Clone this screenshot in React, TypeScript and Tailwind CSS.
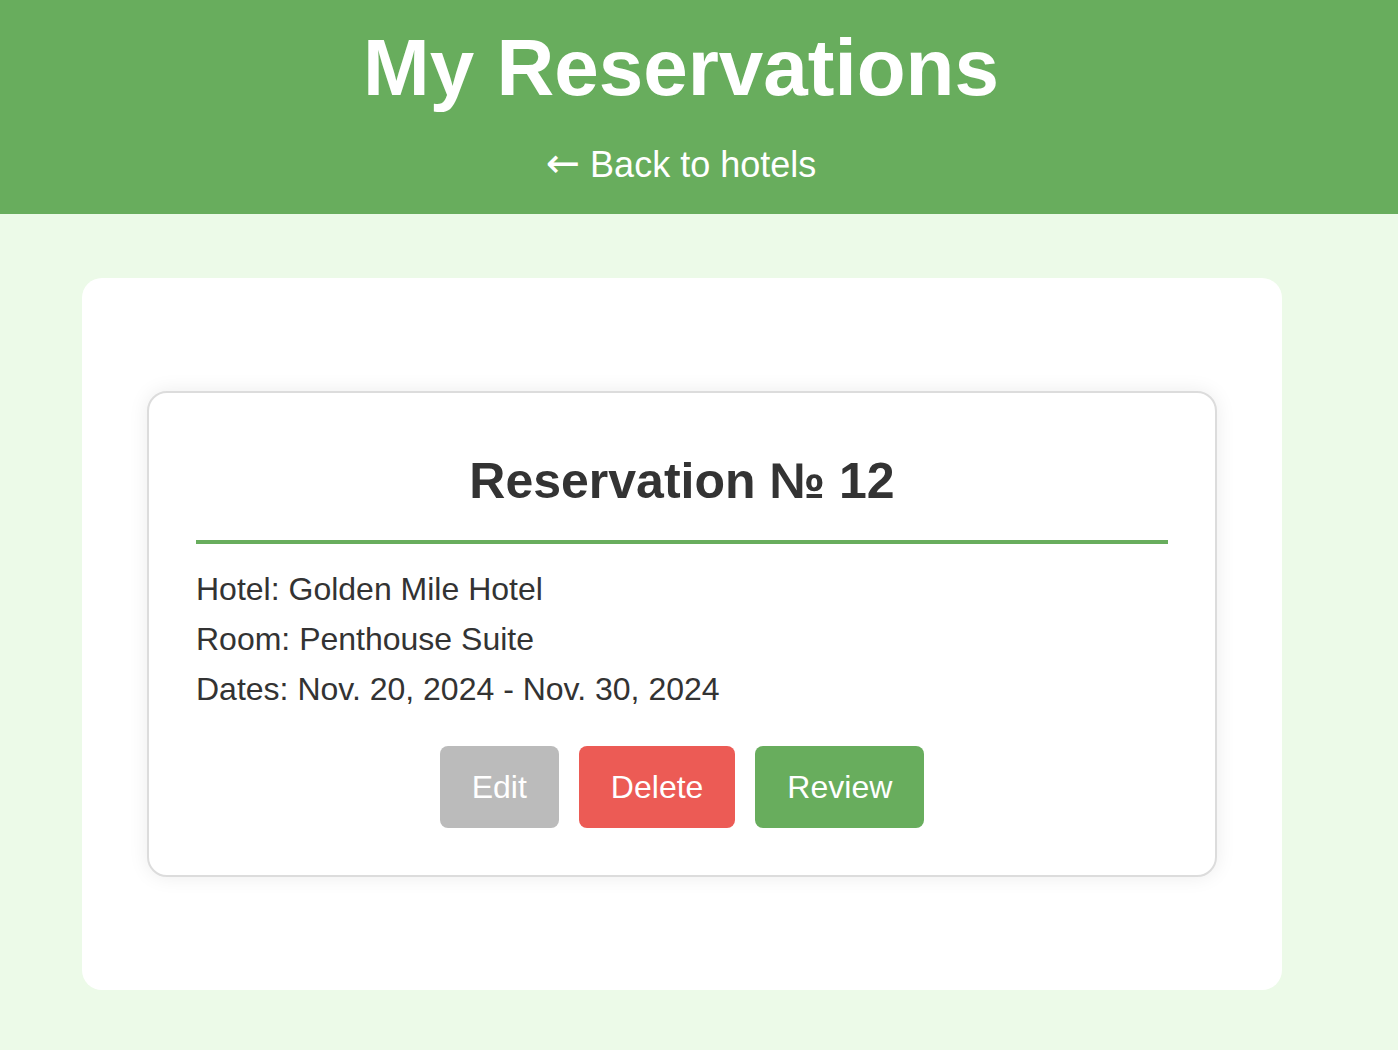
import React from "react";

export default function App() {
  return (
    <div className="min-h-[1050px] bg-[#ecfae8] font-['Liberation_Sans',Arial,sans-serif]">
      <header className="h-[214px] bg-[#68ad5d] pr-[36px] pt-[22px] text-center text-white">
        <h1 className="text-[80px] font-bold leading-[92px]">My Reservations</h1>
        <div className="mt-[30px] text-[36px] leading-[41px]">
          <span className="font-['DejaVu_Sans',sans-serif] text-[41px] leading-[0]">←</span> Back to hotels
        </div>
      </header>
      <main className="pt-[64px]">
        <div className="ml-[82px] w-[1200px] rounded-[20px] bg-white px-[65px] py-[113px]">
          <div className="rounded-[20px] border-2 border-[#dcdcdc] bg-white px-[47px] pb-[47px] pt-[59px] text-[#333333] shadow-[0_0_20px_rgba(0,0,0,0.08)]">
            <h2 className="text-center text-[50px] font-bold leading-[58px]">Reservation № 12</h2>
            <div className="mt-[30px] h-[4px] bg-[#68ad5d]" />
            <div className="mt-[20px] text-[32px] leading-[50px]">
              <p>Hotel: Golden Mile Hotel</p>
              <p>Room: Penthouse Suite</p>
              <p>Dates: Nov. 20, 2024 - Nov. 30, 2024</p>
            </div>
            <div className="mt-[32px] flex justify-center gap-[20px]">
              <button className="h-[82px] rounded-[8px] bg-[#bbbbbb] px-[32px] text-[32px] text-white">Edit</button>
              <button className="h-[82px] rounded-[8px] bg-[#ec5b55] px-[32px] text-[32px] text-white">Delete</button>
              <button className="h-[82px] rounded-[8px] bg-[#68ad5d] px-[32px] text-[32px] text-white">Review</button>
            </div>
          </div>
        </div>
      </main>
    </div>
  );
}
